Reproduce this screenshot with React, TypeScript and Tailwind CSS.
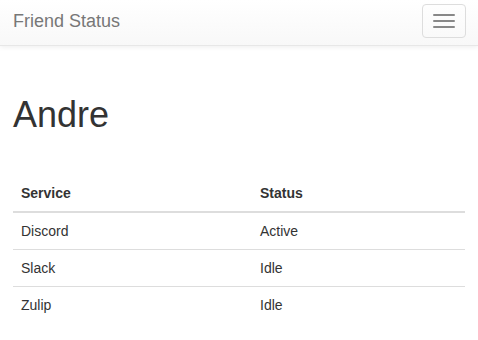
const rows = [
  { service: 'Discord', status: 'Active' },
  { service: 'Slack', status: 'Idle' },
  { service: 'Zulip', status: 'Idle' },
]

export default function App() {
  return (
    <div className="min-h-[340px] bg-white text-[14px] leading-[20px] text-[#333] font-['Liberation_Sans',Arial,sans-serif]">
      <nav className="flex h-[46px] items-start justify-between border-b border-[#e7e7e7] bg-gradient-to-b from-white to-[#f8f8f8] shadow-[0_1px_5px_rgba(0,0,0,0.075)]">
        <span className="ml-[13px] mt-[11px] text-[18px] leading-[20px] text-[#777]">Friend Status</span>
        <button className="mr-[12px] mt-[4px] flex h-[34px] w-[44px] flex-col gap-[4px] rounded-[4px] border border-[#ddd] px-[10px] pt-[9px]">
          <span className="block h-[2px] w-[22px] rounded-[1px] bg-[#888]" />
          <span className="block h-[2px] w-[22px] rounded-[1px] bg-[#888]" />
          <span className="block h-[2px] w-[22px] rounded-[1px] bg-[#888]" />
        </button>
      </nav>

      <div className="px-[13px]">
        <h1 className="mt-[49px] text-[36px] font-normal leading-[39.6px] text-[#333]">Andre</h1>

        <table className="mt-[40px] w-full border-collapse text-left">
          <thead>
            <tr className="border-b-2 border-[#ddd]">
              <th className="w-[239px] p-[8px] font-bold">Service</th>
              <th className="p-[8px] font-bold">Status</th>
            </tr>
          </thead>
          <tbody>
            {rows.map((r, i) => (
              <tr key={r.service} className={i > 0 ? 'border-t border-[#ddd]' : ''}>
                <td className="p-[8px]">{r.service}</td>
                <td className="p-[8px]">{r.status}</td>
              </tr>
            ))}
          </tbody>
        </table>
      </div>
    </div>
  )
}
